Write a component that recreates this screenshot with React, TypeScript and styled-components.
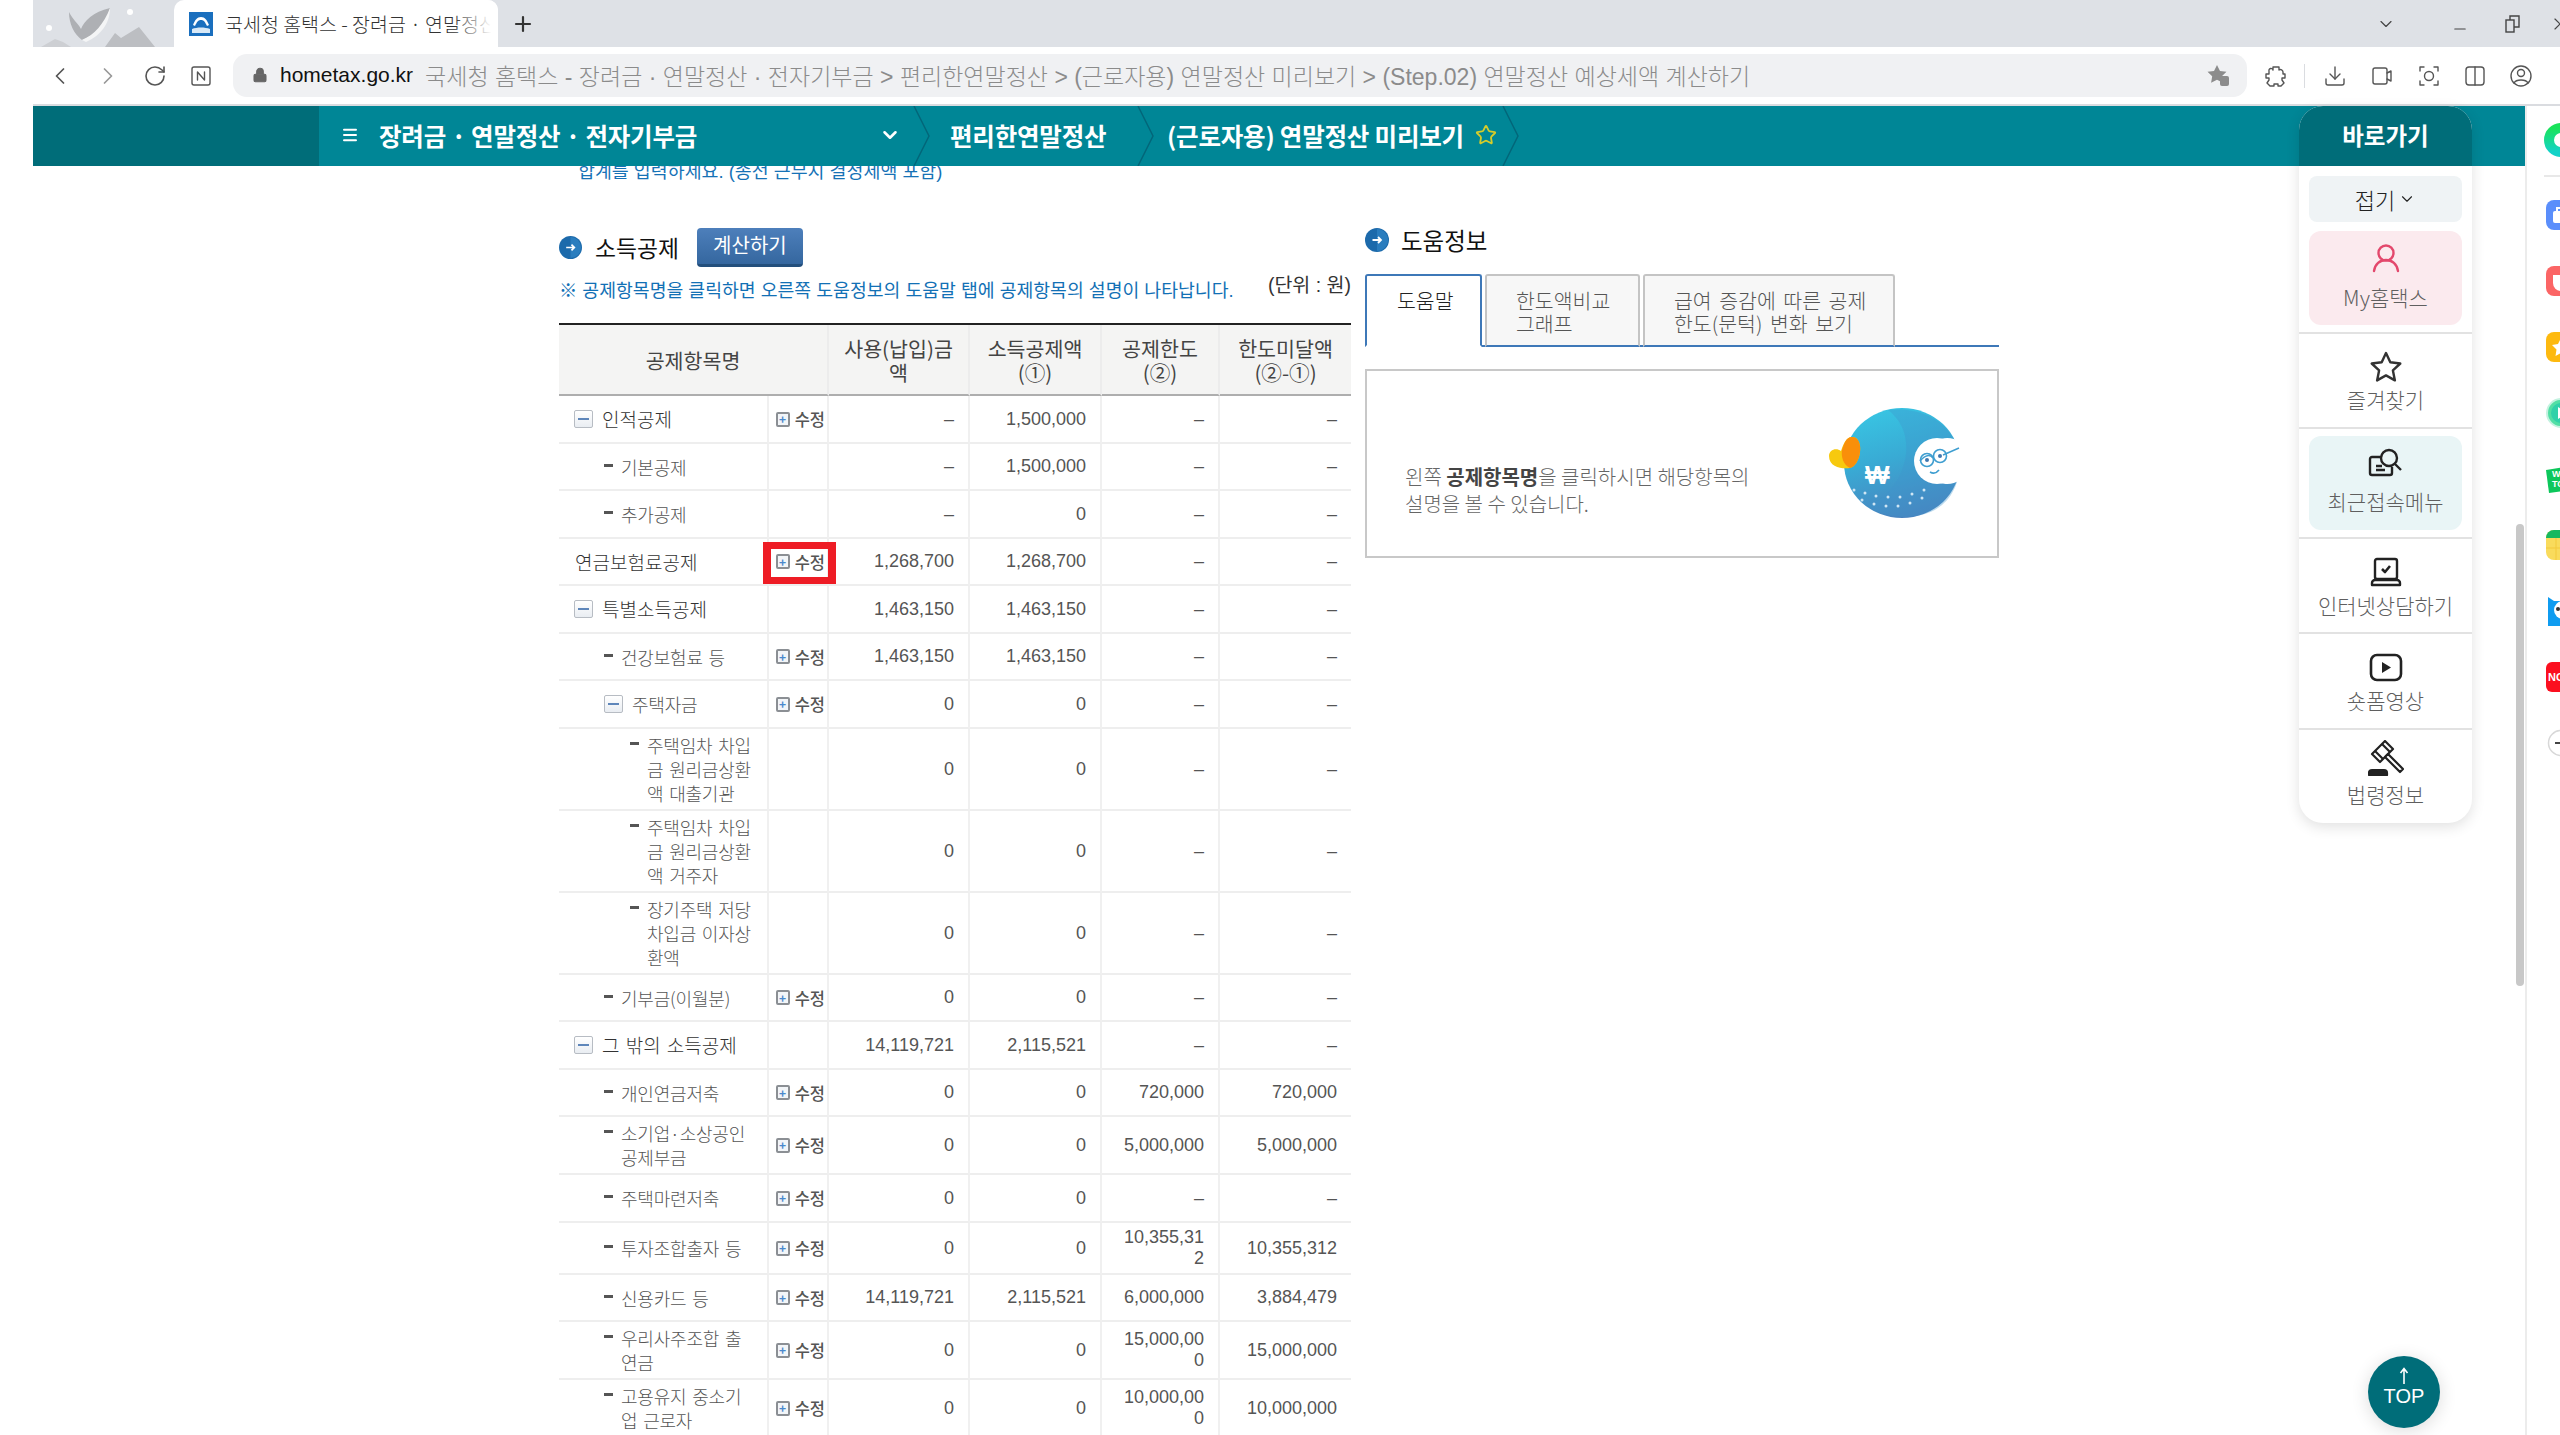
import React from 'react';
import styled, { createGlobalStyle } from 'styled-components';
import { ChevronDown, ChevronLeft, ChevronRight, Download, Lock, Menu, Minus, Plus, RotateCw, Star, X } from 'lucide-react';

const FONT = `"Liberation Sans", "Noto Sans CJK KR", sans-serif`;
const KR = `"Noto Sans CJK KR", "Noto Sans", sans-serif`;

const GlobalStyle = createGlobalStyle`
  html, body {
    margin: 0;
    padding: 0;
    background: #fff;
    font-family: ${FONT};
  }
  * { box-sizing: border-box; }
`;

const Page = styled.div`
  position: relative;
  width: 2560px;
  height: 1435px;
  overflow: hidden;
  background: #fff;
`;

/* browser chrome */
const TabStrip = styled.div`
  display: flex;
  align-items: stretch;
  height: 47px;
  margin-left: 33px;
  background: #dee1e6;
  overflow: hidden;
`;

const Tab = styled.div`
  position: relative;
  display: flex;
  align-items: center;
  gap: 12px;
  flex: none;
  width: 324px;
  padding-left: 15px;
  background: #fff;
  border-radius: 10px 10px 0 0;
  overflow: hidden;
`;

const TabTitle = styled.span`
  font-family: ${KR};
  font-size: 19.5px;
  font-weight: 300;
  color: #333;
  white-space: nowrap;
  &::after {
    content: '';
    position: absolute;
    right: 0;
    top: 0;
    bottom: 0;
    width: 44px;
    background: linear-gradient(90deg, rgba(255, 255, 255, 0), #fff 85%);
  }
`;

const NewTab = styled.div`
  display: flex;
  align-items: center;
  margin-left: 13px;
  color: #333;
`;

const WindowButtons = styled.div`
  display: flex;
  align-items: center;
  margin-left: auto;
  margin-right: -12px;
  color: #444;
`;

const WindowButton = styled.div<{ $w: number }>`
  display: flex;
  justify-content: center;
  width: ${({ $w }) => $w}px;
`;

const Toolbar = styled.div`
  display: flex;
  align-items: center;
  height: 59px;
  margin-left: 33px;
  padding-left: 4px;
  border-bottom: 2px solid #dadce0;
  color: #555;
`;

const ToolButton = styled.div<{ $w?: number }>`
  display: flex;
  align-items: center;
  justify-content: center;
  flex: none;
  width: ${({ $w }) => $w ?? 46}px;
  height: 40px;
`;

const AddressBar = styled.div`
  display: flex;
  align-items: center;
  flex: none;
  width: 2014px;
  height: 43px;
  margin-left: 9px;
  padding: 0 17px 2px 19px;
  background: #f0f1f3;
  border-radius: 14px;
  overflow: hidden;
`;

const Host = styled.span`
  margin-left: 12px;
  font-size: 21px;
  color: #111;
`;

const PageTitle = styled.span`
  margin-left: 12px;
  font-size: 23px;
  color: #8b8b8b;
  font-weight: 300;
  white-space: nowrap;
`;

const BookmarkStar = styled.div`
  display: flex;
  margin-left: auto;
  color: #888;
`;

const ToolDivider = styled.div`
  width: 1px;
  height: 24px;
  margin-right: 6px;
  background: #dadce0;
`;

/* body */
const Workspace = styled.div`
  display: flex;
  height: 1329px;
  margin-left: 33px;
`;

const MainColumn = styled.div`
  position: relative;
  flex: 1;
  min-width: 0;
  overflow: hidden;
`;

const Rail = styled.aside`
  display: flex;
  flex-direction: column;
  align-items: flex-start;
  flex: none;
  width: 35px;
  padding-left: 17px;
  border-left: 2px solid #ececec;
  overflow: hidden;
`;

const RailItem = styled.div<{ $first?: boolean }>`
  display: flex;
  align-items: center;
  flex: none;
  width: 36px;
  height: ${({ $first }) => ($first ? 68 : 66)}px;
`;

const RailDivider = styled.div`
  flex: none;
  width: 30px;
  height: 2px;
  margin: 1px 0 5px;
  background: #e8e8e8;
`;

const NavBar = styled.nav`
  position: relative;
  z-index: 2;
  display: flex;
  height: 60px;
  background: #008696;
  color: #fff;
`;

const NavLead = styled.div`
  flex: none;
  width: 286px;
  background: #006d79;
`;

const NavItem = styled.div<{ $w: number; $pad: number }>`
  display: flex;
  align-items: center;
  flex: none;
  width: ${({ $w }) => $w}px;
  padding-left: ${({ $pad }) => $pad}px;
  padding-bottom: 2px;
  font-family: ${KR};
  font-size: 24.5px;
  font-weight: 700;
  letter-spacing: -0.2px;
  white-space: nowrap;
`;

const NavMenuIcon = styled.span`
  display: flex;
  margin-right: 20px;
`;

const NavCaret = styled.span`
  display: flex;
  margin-left: auto;
  margin-right: 12px;
`;

const NavStar = styled.span`
  display: flex;
  margin-left: 11px;
  color: #d6cc2a;
`;

const Crumb = styled.svg`
  flex: none;
  width: 17px;
  height: 60px;
`;

const Content = styled.main`
  padding-left: 526px;
`;

const CutOffNote = styled.div`
  height: 16px;
  margin: -1px 0 47px 19px;
  font-size: 18.4px;
  line-height: 14px;
  color: #1672b6;
  white-space: nowrap;
`;

const Columns = styled.div`
  display: flex;
  gap: 14px;
`;

const LeftColumn = styled.section`
  flex: none;
  width: 792px;
`;

const RightColumn = styled.section`
  flex: none;
  width: 634px;
`;

const SectionHead = styled.div`
  display: flex;
  align-items: center;
  gap: 13px;
  height: 39px;
`;

const SectionTitle = styled.h2<{ $size: number }>`
  margin: 0;
  font-family: ${KR};
  font-size: ${({ $size }) => $size}px;
  font-weight: 400;
  line-height: 24px;
  color: #111;
`;

const CalcButton = styled.button`
  width: 106px;
  height: 39px;
  margin-left: 5px;
  padding: 0 0 4px;
  border: 0;
  border-bottom: 3px solid #234f7c;
  border-radius: 4px;
  background: linear-gradient(#4d7fbb, #35679f);
  color: #fff;
  font-family: ${KR};
  font-size: 20px;
`;

const NoteRow = styled.div`
  display: flex;
  justify-content: space-between;
  height: 56px;
  padding-top: 6px;
`;

const Note = styled.p`
  margin: 6px 0 0;
  font-size: 18.3px;
  line-height: 24px;
  color: #1270b5;
  white-space: nowrap;
`;

const Unit = styled.span`
  font-size: 19.5px;
  line-height: 24px;
  color: #333;
  white-space: nowrap;
`;

const Table = styled.table`
  width: 792px;
  table-layout: fixed;
  border-collapse: separate;
  border-spacing: 0;
  border-top: 2px solid #222;
`;

const HeadCell = styled.th`
  height: 71px;
  padding: 0 4px;
  background: #f4f4f3;
  border-right: 2px solid #ececec;
  border-bottom: 2px solid #aeaeae;
  font-family: ${KR};
  font-size: 20.6px;
  font-weight: 400;
  line-height: 24px;
  color: #444;
  &:last-child { border-right: 0; }
`;

const Row = styled.tr<{ $h: number }>`
  height: ${({ $h }) => $h}px;
`;

const Cell = styled.td`
  padding: 0;
  border-right: 2px solid #f0f0f0;
  border-bottom: 2px solid #eeeeee;
  vertical-align: middle;
  &:last-child { border-right: 0; }
`;

const NumberCell = styled(Cell)`
  padding: 0 14px 0 4px;
  text-align: right;
  font-size: 18px;
  line-height: 21px;
  color: #555;
  white-space: pre-line;
`;

const LabelBody = styled.div<{ $pad: number; $top?: boolean }>`
  display: flex;
  align-items: flex-start;
  padding-left: ${({ $pad }) => $pad}px;
  font-family: ${KR};
  font-size: ${({ $top }) => ($top ? 19 : 18)}px;
  font-weight: 300;
  line-height: 24px;
  word-spacing: 2px;
  letter-spacing: ${({ $top }) => ($top ? 0 : -0.2)}px;
  color: ${({ $top }) => ($top ? '#333' : '#555')};
`;

const MinusBox = styled.span`
  display: flex;
  align-items: center;
  justify-content: center;
  flex: none;
  width: 19px;
  height: 18px;
  margin: 3px 9px 0 0;
  background: linear-gradient(#fff, #e9edf2);
  border: 1px solid #b7bcc3;
  border-radius: 2px;
  &::before {
    content: '';
    width: 11px;
    height: 2px;
    background: #5e86ba;
  }
`;

const LeafDash = styled.span`
  flex: none;
  width: 9px;
  height: 3px;
  margin: 9px 8px 0 0;
  background: #555;
`;

const LabelLine = styled.span`
  display: block;
  white-space: nowrap;
`;

const EditButton = styled.div`
  display: flex;
  align-items: center;
  justify-content: flex-end;
  gap: 5px;
  padding-right: 2px;
  font-family: ${KR};
  font-size: 16.5px;
  font-weight: 500;
  color: #555;
`;

const EditPlus = styled.span`
  display: flex;
  align-items: center;
  justify-content: center;
  width: 14px;
  height: 15px;
  border: 2px solid #8b8f94;
  border-radius: 2px;
  background: #f2f5f8;
  color: #4a88cc;
  font-size: 12px;
  line-height: 1;
  font-weight: 700;
`;

const Highlight = styled.div`
  position: absolute;
  left: 730px;
  top: 436px;
  width: 73px;
  height: 42px;
  border: solid #ee1c25;
  border-width: 7px 8px;
`;

const RightHead = styled(SectionHead)`
  align-items: flex-start;
  gap: 12px;
  height: 46px;
`;

const Tabs = styled.div`
  display: flex;
  gap: 3px;
  height: 73px;
  border-bottom: 2px solid #3e78b8;
`;

const HelpTab = styled.div<{ $active?: boolean; $w: number; $pad: number }>`
  width: ${({ $w }) => $w}px;
  height: 73px;
  padding: 13px 0 0 ${({ $pad }) => $pad}px;
  border: 2px solid ${({ $active }) => ($active ? '#3e78b8' : '#c4c4c4')};
  border-bottom: ${({ $active }) => ($active ? '2px solid #fff' : '2px solid #3e78b8')};
  border-radius: 3px 3px 0 0;
  background: ${({ $active }) => ($active ? '#fff' : '#f7f7f7')};
  color: ${({ $active }) => ($active ? '#222' : '#555')};
  font-family: ${KR};
  font-size: 20.5px;
  font-weight: 300;
  line-height: 23px;
  word-spacing: 3px;
`;

const TabLine = styled.span`
  display: block;
  white-space: nowrap;
`;

const HelpBox = styled.div`
  display: flex;
  align-items: flex-start;
  justify-content: space-between;
  height: 189px;
  margin-top: 22px;
  padding: 37px 37px 0 38px;
  border: 2px solid #c8c8c8;
`;

const HelpText = styled.p`
  margin: 55px 0 0;
  font-family: ${KR};
  font-size: 20px;
  line-height: 27px;
  color: #666;
  font-weight: 300;
  b {
    color: #444;
    font-weight: 700;
  }
`;

const ScrollThumb = styled.div`
  position: absolute;
  right: 1px;
  top: 418px;
  width: 8px;
  height: 462px;
  border-radius: 4px;
  background: #c8c8c8;
`;

/* floating shortcut panel */
const Shortcuts = styled.aside`
  position: absolute;
  left: 2299px;
  top: 106px;
  z-index: 3;
  width: 173px;
  height: 717px;
  background: #fff;
  border-radius: 24px;
  box-shadow: 0 4px 14px rgba(0, 0, 0, 0.12);
`;

const ShortcutHead = styled.div`
  display: flex;
  align-items: center;
  justify-content: center;
  height: 60px;
  padding-bottom: 2px;
  background: #006d79;
  border-radius: 24px 24px 0 0;
  font-family: ${KR};
  font-size: 23.5px;
  font-weight: 700;
  color: #fff;
`;

const FoldButton = styled.div`
  display: flex;
  align-items: center;
  justify-content: center;
  gap: 3px;
  width: 153px;
  height: 46px;
  margin: 10px 10px 2px;
  background: #eff3f5;
  border-radius: 8px;
  font-family: ${KR};
  font-size: 22px;
  font-weight: 300;
  color: #222;
`;

const ShortcutItem = styled.div<{ $boxed?: boolean; $last?: boolean; $h: number }>`
  height: ${({ $h }) => $h}px;
  padding: ${({ $boxed }) => ($boxed ? '7px 10px' : '0 10px')};
  border-bottom: ${({ $last }) => ($last ? '0' : '2px solid #e2e2e2')};
`;

const ShortcutBox = styled.div<{ $bg?: string; $pad: number }>`
  display: flex;
  flex-direction: column;
  align-items: center;
  height: 94px;
  padding-top: ${({ $pad }) => $pad}px;
  background: ${({ $bg }) => $bg ?? 'transparent'};
  border-radius: 12px;
`;

const ShortcutIcon = styled.svg`
  display: block;
  flex: none;
  width: 36px;
  height: 36px;
`;

const ShortcutLabel = styled.span<{ $gap: number }>`
  margin-top: ${({ $gap }) => $gap}px;
  font-family: ${KR};
  font-size: 21px;
  font-weight: 300;
  line-height: 24px;
  color: #5f5f5f;
  white-space: nowrap;
`;

const TopButton = styled.div`
  position: absolute;
  left: 2368px;
  top: 1356px;
  z-index: 3;
  display: flex;
  flex-direction: column;
  align-items: center;
  width: 72px;
  height: 72px;
  padding-top: 11px;
  border-radius: 50%;
  background: #006d79;
  box-shadow: 0 3px 18px rgba(0, 0, 0, 0.14);
  color: #fff;
  font-size: 20px;
  line-height: 22px;
`;

const TopArrow = styled.svg`
  display: block;
  width: 12px;
  height: 18px;
`;

const BulletSvg = styled.svg<{ $size: number }>`
  display: block;
  flex: none;
  width: ${({ $size }) => $size}px;
  height: ${({ $size }) => $size}px;
`;

const Bullet = ({ size }: { size: number }) => (
  <BulletSvg $size={size} viewBox="0 0 24 24">
    <circle cx="12" cy="12" r="12" fill="#1c6aab" />
    <path d="M12 1a11 11 0 0 1 0 22z" fill="#2a7dbe" />
    <path d="M7.500 12h8M13 9l3 3-3 3" fill="none" stroke="#fff" strokeWidth="1.800" />
  </BulletSvg>
);

const Favicon = () => (
  <svg width="24" height="24" viewBox="0 0 24 24" style={{ flex: 'none' }}>
    <rect width="24" height="24" fill="#1a6fbe" />
    <path d="M4 13c2-5 4-8 8-8s6 3 8 8l-2 1c-2-4-3-6-6-6s-4 2-6 6z" fill="#fff" />
    <path d="M3 17c5-2 13-2 18 0v4H3z" fill="#d8e9f7" />
  </svg>
);

const Wallpaper = () => (
  <svg width="141" height="47" viewBox="0 0 141 47" style={{ flex: 'none' }}>
    <circle cx="16" cy="28" r="3" fill="#fff" />
    <circle cx="97" cy="12" r="3" fill="#fff" />
    <path d="M36 12c4 8 8 10 12 17 3-8 12-17 29-21-3 14-12 26-28 32-8-6-13-16-13-28z" fill="#aeb0b4" />
    <path d="M49 40c12-5 22-16 28-32 0 16-10 28-24 34z" fill="#f4f5f6" />
    <path d="M8 47l14-8 8 3 8 5z" fill="#cdcfd3" />
    <path d="M72 47l10-14 6 5 18-11 16 20z" fill="#bcbec2" />
  </svg>
);

const RestoreIcon = () => (
  <svg width="18" height="20" viewBox="0 0 18 20" fill="none" stroke="#444" strokeWidth="1.4">
    <rect x="2" y="6" width="8" height="12" />
    <path d="M6 6V2h9v11h-5" />
  </svg>
);

const StrokeIcon = ({ children }: { children: React.ReactNode }) => (
  <svg width="26" height="26" viewBox="0 0 26 26" fill="none" stroke="#555" strokeWidth="1.4" strokeLinejoin="round" strokeLinecap="round">
    {children}
  </svg>
);

const BookmarkIcon = () => (
  <svg width="24" height="24" viewBox="0 0 24 24" fill="#8c8c8c">
    <path d="M11 2l3 6 6.5.8-4.7 4.5 1.1 6.5L11 16.8 5.100 19.8l1.100-6.500L1.500 8.800 8 8z" />
    <rect x="14" y="13" width="9" height="10" rx="2" />
  </svg>
);

const railIcons: React.ReactNode[] = [
  <>
    <defs>
      <linearGradient id="rg1" x1="0" y1="0" x2="0" y2="1">
        <stop offset="0" stopColor="#19e35a" />
        <stop offset="1" stopColor="#14d2c8" />
      </linearGradient>
    </defs>
    <circle cx="17" cy="17" r="12" fill="none" stroke="url(#rg1)" strokeWidth="10" />
  </>,
  <>
    <rect x="2" y="2" width="30" height="30" rx="8" fill="#5a8efb" />
    <rect x="9" y="13" width="16" height="12" rx="2" fill="#fff" />
    <path d="M13 13v-3h8v3" fill="none" stroke="#fff" strokeWidth="2" />
  </>,
  <>
    <rect x="2" y="2" width="30" height="30" rx="8" fill="#fb6565" />
    <path d="M9 11h16v8a8 8 0 0 1-8 8 8 8 0 0 1-8-8z" fill="#fff" />
  </>,
  <>
    <rect x="2" y="2" width="30" height="30" rx="8" fill="#fdb90f" />
    <path d="M17 8l3 6 6 1-4.500 4.500 1 6.500-5.500-3-5.500 3 1-6.500L8 15l6-1z" fill="#fff" />
  </>,
  <>
    <circle cx="17" cy="17" r="14" fill="#52dfa5" stroke="#c4f2e0" strokeWidth="2" />
    <circle cx="17" cy="17" r="10" fill="#2fd1a9" />
    <path d="M14 11l9 6-9 6z" fill="#fff" />
  </>,
  <>
    <path d="M2 8l32-5v24L5 31z" fill="#0dc75b" />
    <text x="8" y="15" fontSize="9" fontWeight="700" fill="#fff" fontFamily="Liberation Sans">WE</text>
    <text x="8" y="25" fontSize="9" fontWeight="700" fill="#fff" fontFamily="Liberation Sans">TO</text>
  </>,
  <>
    <rect x="2" y="2" width="30" height="30" rx="8" fill="#f9db5c" />
    <path d="M2 10a8 8 0 0 1 8-8h16a8 8 0 0 1 6 8z" fill="#17b85f" />
    <path d="M12 10v22M22 10v22M2 20h30" stroke="#f3c93c" strokeWidth="1" />
  </>,
  <>
    <path d="M4 3l6 4h14l7-4v20a9 9 0 0 1-9 9H4z" fill="#0f9cf0" />
    <circle cx="19" cy="16" r="9" fill="#fff" />
    <circle cx="14" cy="15" r="2" fill="#333" />
  </>,
  <>
    <rect x="2" y="2" width="30" height="30" rx="6" fill="#fb0f1f" />
    <text x="4" y="21" fontSize="11" fontWeight="700" fill="#fff" fontFamily="Liberation Sans">NOW</text>
  </>,
  <>
    <circle cx="17" cy="17" r="12.500" fill="#fff" stroke="#d8d8d8" strokeWidth="1.500" />
    <path d="M17 11v12M11 17h12" stroke="#444" strokeWidth="1.800" />
  </>,
];

const GlobeArt = () => (
  <svg width="132" height="110" viewBox="0 0 132 110" style={{ flex: 'none' }}>
    <defs>
      <linearGradient id="gb" x1="0.3" y1="0" x2="0.6" y2="1">
        <stop offset="0" stopColor="#38c5e3" />
        <stop offset="0.45" stopColor="#39aad4" />
        <stop offset="1" stopColor="#4a80bd" />
      </linearGradient>
    </defs>
    <ellipse cx="74" cy="55" rx="58" ry="55" fill="url(#gb)" />
    <path d="M60 2c16 12 24 34 14 60-6 16-18 30-34 36 24 18 90 20 92-43 0-30-28-58-72-53z" fill="#3f95ca" opacity="0.35" />
    <path d="M132 34a23 23 0 1 0 0 38z" fill="#fff" />
    <circle cx="109" cy="53" r="23" fill="#fff" />
    <path d="M92 53q8-9 13-3M115 47l16-7" fill="none" stroke="#3f9ed0" strokeWidth="1.500" />
    <circle cx="99" cy="52" r="6.500" fill="none" stroke="#3f9ed0" strokeWidth="1.600" />
    <circle cx="112" cy="48" r="6.500" fill="none" stroke="#3f9ed0" strokeWidth="1.600" />
    <circle cx="99" cy="52" r="2" fill="#3f78b0" />
    <circle cx="112" cy="48" r="2" fill="#3f78b0" />
    <path d="M102 64q5 3 9-2" fill="none" stroke="#3f9ed0" strokeWidth="1.600" />
    <text x="37" y="76" fontSize="26" fontWeight="700" fill="#fff" fontFamily="Liberation Sans">₩</text>
    <g fill="#cfe6f4">
      {[[26, 82], [37, 85], [48, 88], [60, 89], [72, 89], [84, 86], [96, 82], [34, 92], [46, 96], [58, 98], [70, 98], [82, 95], [94, 90]].map(([x, y]) => (
        <circle key={`${x}-${y}`} cx={x} cy={y} r="1.500" />
      ))}
    </g>
    <path d="M1 48c0-6 7-9 12-5 2-6 5-14 11-14 7 0 9 8 8 15-1 8-5 15-10 16-7 1-21 0-21-12z" fill="#f7c90e" />
    <path d="M14 42c2-6 4-13 10-13 7 0 9 8 8 15-1 8-5 15-10 16-7-3-9-12-8-18z" fill="#f98f0a" />
  </svg>
);

type RowKind = 'top' | 'group' | 'leaf' | 'subgroup' | 'sub';

interface RowData {
  label: string[];
  kind: RowKind;
  edit?: boolean;
  vals: [string, string, string, string];
  h: number;
}

const D = '–';

const rows: RowData[] = [
  { label: ['인적공제'], kind: 'group', edit: true, vals: [D, '1,500,000', D, D], h: 48 },
  { label: ['기본공제'], kind: 'leaf', vals: [D, '1,500,000', D, D], h: 47 },
  { label: ['추가공제'], kind: 'leaf', vals: [D, '0', D, D], h: 48 },
  { label: ['연금보험료공제'], kind: 'top', edit: true, vals: ['1,268,700', '1,268,700', D, D], h: 47 },
  { label: ['특별소득공제'], kind: 'group', vals: ['1,463,150', '1,463,150', D, D], h: 48 },
  { label: ['건강보험료 등'], kind: 'leaf', edit: true, vals: ['1,463,150', '1,463,150', D, D], h: 47 },
  { label: ['주택자금'], kind: 'subgroup', edit: true, vals: ['0', '0', D, D], h: 48 },
  { label: ['주택임차 차입', '금 원리금상환', '액 대출기관'], kind: 'sub', vals: ['0', '0', D, D], h: 82 },
  { label: ['주택임차 차입', '금 원리금상환', '액 거주자'], kind: 'sub', vals: ['0', '0', D, D], h: 82 },
  { label: ['장기주택 저당', '차입금 이자상', '환액'], kind: 'sub', vals: ['0', '0', D, D], h: 82 },
  { label: ['기부금(이월분)'], kind: 'leaf', edit: true, vals: ['0', '0', D, D], h: 47 },
  { label: ['그 밖의 소득공제'], kind: 'group', vals: ['14,119,721', '2,115,521', D, D], h: 48 },
  { label: ['개인연금저축'], kind: 'leaf', edit: true, vals: ['0', '0', '720,000', '720,000'], h: 47 },
  { label: ['소기업·소상공인', '공제부금'], kind: 'leaf', edit: true, vals: ['0', '0', '5,000,000', '5,000,000'], h: 58 },
  { label: ['주택마련저축'], kind: 'leaf', edit: true, vals: ['0', '0', D, D], h: 48 },
  { label: ['투자조합출자 등'], kind: 'leaf', edit: true, vals: ['0', '0', '10,355,31\n2', '10,355,312'], h: 52 },
  { label: ['신용카드 등'], kind: 'leaf', edit: true, vals: ['14,119,721', '2,115,521', '6,000,000', '3,884,479'], h: 47 },
  { label: ['우리사주조합 출', '연금'], kind: 'leaf', edit: true, vals: ['0', '0', '15,000,00\n0', '15,000,000'], h: 58 },
  { label: ['고용유지 중소기', '업 근로자'], kind: 'leaf', edit: true, vals: ['0', '0', '10,000,00\n0', '10,000,000'], h: 58 },
];

const labelPad: Record<RowKind, number> = { top: 16, group: 15, leaf: 45, subgroup: 45, sub: 71 };

const RowLabel = ({ row }: { row: RowData }) => {
  const isBox = row.kind === 'group' || row.kind === 'subgroup';
  const isTop = row.kind === 'group' || row.kind === 'top';
  return (
    <LabelBody $pad={labelPad[row.kind]} $top={isTop}>
      {isBox && <MinusBox />}
      {(row.kind === 'leaf' || row.kind === 'sub') && <LeafDash />}
      <div>
        {row.label.map((line) => (
          <LabelLine key={line}>{line}</LabelLine>
        ))}
      </div>
    </LabelBody>
  );
};

const shortcutItems = [
  {
    label: 'My홈택스',
    bg: '#fbeaee',
    h: 110,
    pad: 9,
    gap: 9,
    icon: (
      <g fill="none" stroke="#e3486c" strokeWidth="2.400" strokeLinecap="round">
        <circle cx="18" cy="13" r="7.500" />
        <path d="M6 31c1-7 6-11 12-11s11 4 12 11" />
      </g>
    ),
  },
  {
    label: '즐겨찾기',
    h: 95,
    pad: 15,
    gap: 2,
    icon: <path d="M18 4l4.300 9.300 10 1.200-7.400 6.900 2 10L18 26.400l-8.900 5 2-10-7.400-6.900 10-1.200z" fill="none" stroke="#333" strokeWidth="2.400" strokeLinejoin="round" />,
  },
  {
    label: '최근접속메뉴',
    bg: '#e9f5f6',
    h: 110,
    pad: 12,
    gap: 5,
    icon: (
      <g fill="none" stroke="#222" strokeWidth="2.400">
        <path d="M14 9H4a2 2 0 0 0-2 2v14a2 2 0 0 0 2 2h18a2 2 0 0 0 2-2v-6" />
        <circle cx="21" cy="10" r="8" fill="#e9f5f6" />
        <path d="M27 16l6 6M8 18h6M8 22h9" />
      </g>
    ),
  },
  {
    label: '인터넷상담하기',
    h: 95,
    pad: 15,
    gap: 3,
    icon: (
      <g fill="none" stroke="#222" strokeWidth="2.400" strokeLinejoin="round">
        <rect x="7" y="5" width="22" height="20" rx="2" />
        <path d="M4 31v-2a3 3 0 0 1 3-3h22a3 3 0 0 1 3 3v2z" />
        <path d="M14 15l3 3 5-6" strokeWidth="2.600" />
      </g>
    ),
  },
  {
    label: '숏폼영상',
    h: 96,
    pad: 16,
    gap: 2,
    icon: (
      <>
        <rect x="3" y="5" width="30" height="25" rx="6" fill="none" stroke="#222" strokeWidth="2.600" />
        <path d="M14 12l9 5.500-9 5.500z" fill="#222" />
      </>
    ),
  },
  {
    label: '법령정보',
    h: 93,
    pad: 10,
    gap: 6,
    last: true,
    icon: (
      <g fill="#fff" stroke="#222" strokeWidth="2.200" strokeLinejoin="round">
        <path d="M17 1l8 8-13 13-8-8z" />
        <path d="M14 4l8 8M7 11l8 8" fill="none" />
        <path d="M17 17l3-3 15 15-3 3z" />
        <path d="M1 35v-2a3 3 0 0 1 3-3h12a3 3 0 0 1 3 3v2z" fill="#222" />
      </g>
    ),
  },
];

const CrumbLine = () => (
  <Crumb viewBox="0 0 17 60">
    <path d="M1 0l15 30L1 60" fill="none" stroke="#03677a" strokeWidth="1.500" />
  </Crumb>
);

export default function App() {
  return (
    <Page>
      <GlobalStyle />
      <TabStrip>
        <Wallpaper />
        <Tab>
          <Favicon />
          <TabTitle>국세청 홈택스 - 장려금 · 연말정산 · 전자기부금</TabTitle>
        </Tab>
        <NewTab>
          <Plus size={24} strokeWidth={2.2} />
        </NewTab>
        <WindowButtons>
          <WindowButton $w={112}><ChevronDown size={20} strokeWidth={1.4} /></WindowButton>
          <WindowButton $w={36}><Minus size={18} strokeWidth={1.4} style={{ marginTop: 10 }} /></WindowButton>
          <WindowButton $w={70}><RestoreIcon /></WindowButton>
          <WindowButton $w={24}><X size={20} strokeWidth={1.4} /></WindowButton>
        </WindowButtons>
      </TabStrip>

      <Toolbar>
        <ToolButton><ChevronLeft size={28} strokeWidth={1.5} /></ToolButton>
        <ToolButton $w={49}><ChevronRight size={28} strokeWidth={1.5} color="#999" /></ToolButton>
        <ToolButton><RotateCw size={24} strokeWidth={1.6} /></ToolButton>
        <ToolButton>
          <StrokeIcon>
            <rect x="4" y="4" width="18" height="18" rx="2" />
            <path d="M9.500 17V9l7 8V9" />
          </StrokeIcon>
        </ToolButton>
        <AddressBar>
          <Lock size={16} strokeWidth={0} fill="#666" style={{ flex: 'none', stroke: '#666', strokeWidth: 1.6 }} />
          <Host>hometax.go.kr</Host>
          <PageTitle>국세청 홈택스 - 장려금 · 연말정산 · 전자기부금 &gt; 편리한연말정산 &gt; (근로자용) 연말정산 미리보기 &gt; (Step.02) 연말정산 예상세액 계산하기</PageTitle>
          <BookmarkStar><BookmarkIcon /></BookmarkStar>
        </AddressBar>
        <ToolButton $w={57}>
          <StrokeIcon>
            <path d="M10 4h6v3a2.500 2.500 0 0 1 4 2v2h2v4h-3v2l2 3-3 3h-3v-2h-4v2H7l-3-3 2-3v-2H3v-4h3V8a2 2 0 0 1 4-1z" />
          </StrokeIcon>
        </ToolButton>
        <ToolDivider />
        <ToolButton $w={47}><Download size={24} strokeWidth={1.4} /></ToolButton>
        <ToolButton $w={47}>
          <StrokeIcon>
            <rect x="4" y="5" width="14" height="16" rx="2" />
            <path d="M18 10l4-2v10l-4-2" />
          </StrokeIcon>
        </ToolButton>
        <ToolButton $w={47}>
          <StrokeIcon>
            <path d="M4 8V4h4M18 4h4v4M22 18v4h-4M8 22H4v-4" />
            <circle cx="13" cy="13" r="4.500" />
          </StrokeIcon>
        </ToolButton>
        <ToolButton $w={46}>
          <StrokeIcon>
            <rect x="4" y="4" width="18" height="18" rx="3" />
            <path d="M13 4v18" />
          </StrokeIcon>
        </ToolButton>
        <ToolButton $w={46}>
          <StrokeIcon>
            <circle cx="13" cy="13" r="10" />
            <circle cx="13" cy="10" r="3.500" />
            <path d="M6 20c2-4 12-4 14 0" />
          </StrokeIcon>
        </ToolButton>
      </Toolbar>

      <Workspace>
        <MainColumn>
          <NavBar>
            <NavLead />
            <NavItem $w={594} $pad={22}>
              <NavMenuIcon><Menu size={18} strokeWidth={2.6} /></NavMenuIcon>
              장려금 · 연말정산 · 전자기부금
              <NavCaret><ChevronDown size={22} strokeWidth={2.8} /></NavCaret>
            </NavItem>
            <CrumbLine />
            <NavItem $w={207} $pad={20}>편리한연말정산</NavItem>
            <CrumbLine />
            <NavItem $w={348} $pad={13}>
              (근로자용) 연말정산 미리보기
              <NavStar><Star size={22} strokeWidth={2} /></NavStar>
            </NavItem>
            <CrumbLine />
          </NavBar>
          <Content>
            <CutOffNote>합계를 입력하세요. (종전 근무지 결정세액 포함)</CutOffNote>
            <Columns>
              <LeftColumn>
                <SectionHead>
                  <Bullet size={23} />
                  <SectionTitle $size={22.8}>소득공제</SectionTitle>
                  <CalcButton>계산하기</CalcButton>
                </SectionHead>
                <NoteRow>
                  <Note>※ 공제항목명을 클릭하면 오른쪽 도움정보의 도움말 탭에 공제항목의 설명이 나타납니다.</Note>
                  <Unit>(단위 : 원)</Unit>
                </NoteRow>
                <Table>
                  <colgroup>
                    <col width={210} />
                    <col width={60} />
                    <col width={141} />
                    <col width={132} />
                    <col width={118} />
                    <col width={131} />
                  </colgroup>
                  <thead>
                    <tr>
                      <HeadCell colSpan={2}>공제항목명</HeadCell>
                      <HeadCell>사용(납입)금<br />액</HeadCell>
                      <HeadCell>소득공제액<br />(①)</HeadCell>
                      <HeadCell>공제한도<br />(②)</HeadCell>
                      <HeadCell>한도미달액<br />(②-①)</HeadCell>
                    </tr>
                  </thead>
                  <tbody>
                    {rows.map((row) => (
                      <Row key={row.label.join('')} $h={row.h}>
                        <Cell><RowLabel row={row} /></Cell>
                        <Cell>
                          {row.edit && (
                            <EditButton>
                              <EditPlus>+</EditPlus>
                              수정
                            </EditButton>
                          )}
                        </Cell>
                        {row.vals.map((val, i) => (
                          <NumberCell key={i}>{val}</NumberCell>
                        ))}
                      </Row>
                    ))}
                  </tbody>
                </Table>
              </LeftColumn>
              <RightColumn>
                <RightHead>
                  <Bullet size={24} />
                  <SectionTitle $size={23.5}>도움정보</SectionTitle>
                </RightHead>
                <Tabs>
                  <HelpTab $active $w={117} $pad={30}>도움말</HelpTab>
                  <HelpTab $w={155} $pad={29}>
                    <TabLine>한도액비교</TabLine>
                    <TabLine>그래프</TabLine>
                  </HelpTab>
                  <HelpTab $w={252} $pad={29}>
                    <TabLine>급여 증감에 따른 공제</TabLine>
                    <TabLine>한도(문턱) 변화 보기</TabLine>
                  </HelpTab>
                </Tabs>
                <HelpBox>
                  <HelpText>
                    왼쪽 <b>공제항목명</b>을 클릭하시면 해당항목의<br />
                    설명을 볼 수 있습니다.
                  </HelpText>
                  <GlobeArt />
                </HelpBox>
              </RightColumn>
            </Columns>
          </Content>
          <Highlight />
          <ScrollThumb />
        </MainColumn>
        <Rail>
          {railIcons.map((icon, i) => (
            <React.Fragment key={i}>
              <RailItem $first={i === 0}>
                <svg width="34" height="34" viewBox="0 0 34 34" style={{ flex: 'none' }}>{icon}</svg>
              </RailItem>
              {i === 0 && <RailDivider />}
            </React.Fragment>
          ))}
        </Rail>
      </Workspace>

      <Shortcuts>
        <ShortcutHead>바로가기</ShortcutHead>
        <FoldButton>접기 <ChevronDown size={18} strokeWidth={1.5} /></FoldButton>
        {shortcutItems.map((item) => (
          <ShortcutItem key={item.label} $boxed={!!item.bg} $last={item.last} $h={item.h}>
            <ShortcutBox $bg={item.bg} $pad={item.pad}>
              <ShortcutIcon viewBox="0 0 36 36">{item.icon}</ShortcutIcon>
              <ShortcutLabel $gap={item.gap}>{item.label}</ShortcutLabel>
            </ShortcutBox>
          </ShortcutItem>
        ))}
      </Shortcuts>

      <TopButton>
        <TopArrow viewBox="0 0 12 18">
          <path d="M6 17V2M2.500 6 6 1.500 9.500 6" fill="none" stroke="#fff" strokeWidth="1.600" />
        </TopArrow>
        TOP
      </TopButton>
    </Page>
  );
}
